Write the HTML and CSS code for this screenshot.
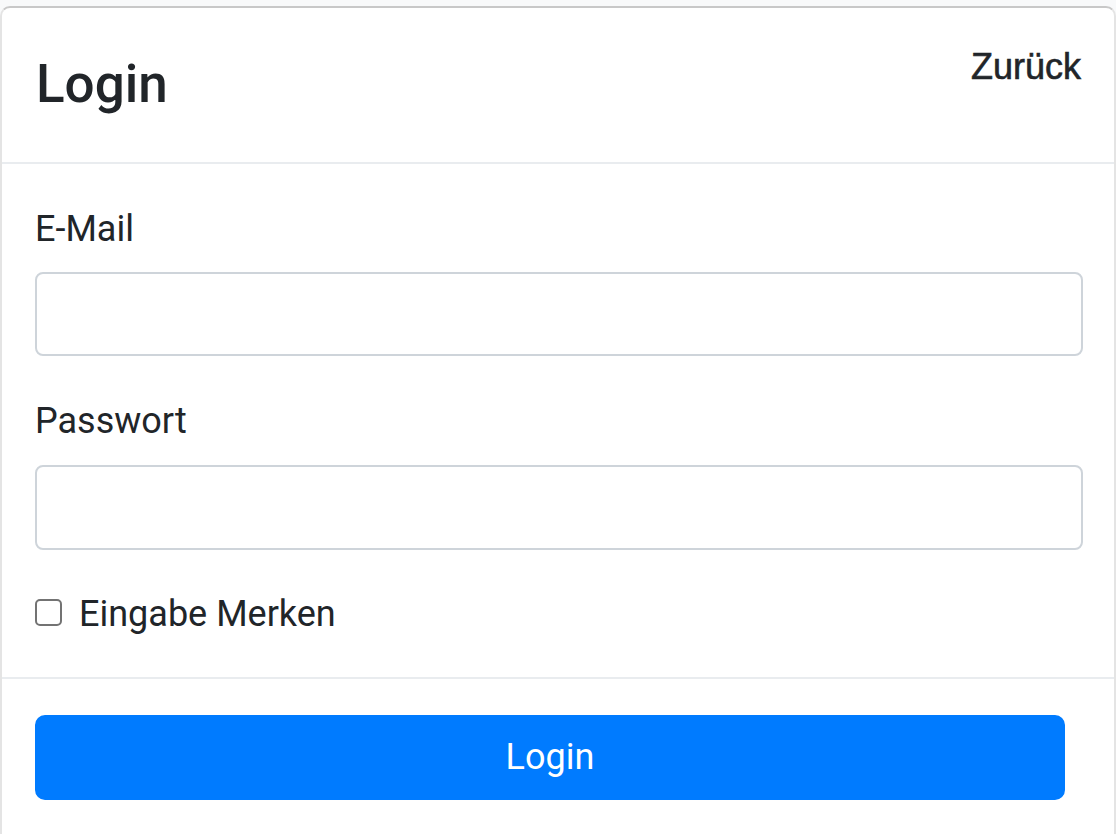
FILE: index.html
```html
<!DOCTYPE html>
<html lang="de">
<head>
<meta charset="utf-8">
<title>Login</title>
<link rel="stylesheet" href="styles.css">
</head>
<body>
<div class="card">
  <div class="card-header">
    <h3 class="title">Login</h3>
    <a class="back" href="#">Zurück</a>
  </div>
  <div class="card-body">
    <div class="group">
      <label class="label" for="email">E-Mail</label>
      <input class="input" id="email" type="email">
    </div>
    <div class="group group-pw">
      <label class="label" for="pw">Passwort</label>
      <input class="input input-pw" id="pw" type="password">
    </div>
    <label class="check">
      <span class="box"></span>
      <span class="check-text">Eingabe Merken</span>
    </label>
  </div>
  <div class="card-footer">
    <button class="btn" type="button">Login</button>
  </div>
</div>
</body>
</html>
```

FILE: styles.css
```css
* { box-sizing: border-box; }
html, body { margin: 0; padding: 0; }
body {
  background: #f8f9fa;
  font-family: Roboto, "Liberation Sans", Arial, sans-serif;
  color: #212529;
  overflow: hidden;
  height: 834px;
}
.card {
  margin-top: 6px;
  background: #fff;
  border: 2px solid #c8c8c8;
  border-color: #c8c8c8 #e4e4e4 #e4e4e4 #e4e4e4;
  border-radius: 10px 10px 0 0;
  min-height: 840px;
}
.card-header {
  display: flex;
  justify-content: space-between;
  align-items: flex-start;
  padding: 45px 33px 45px 34px;
  border-bottom: 2px solid #e9ecef;
}
.title {
  margin: 0;
  font-size: 53px;
  font-weight: 500;
  line-height: 1.2;
}
.back {
  font-family: "Liberation Sans", Arial, sans-serif;
  font-size: 36px;
  line-height: 1.2;
  color: #212529;
  text-decoration: none;
  margin-top: -8px;
  -webkit-text-stroke: 0.6px #212529;
}
.card-body {
  padding: 38px 31px 36px 33px;
}
.group {
  margin-bottom: 38px;
}
.label {
  display: block;
  font-size: 36px;
  line-height: 54px;
  margin-bottom: 16px;
}
.group-pw .label { margin-bottom: 17px; }
.group-pw { margin-bottom: 37px; }
.input {
  display: block;
  width: 100%;
  height: 84px;
  border: 2px solid #ced4da;
  border-radius: 8px;
  background: #fff;
  font-size: 36px;
  padding: 0 24px;
  outline: none;
}
.input-pw { height: 85px; }
.check {
  display: flex;
  align-items: center;
  font-size: 36px;
  line-height: 54px;
}
.box {
  width: 27px;
  height: 27px;
  border: 2px solid #737373;
  border-radius: 5px;
  background: #fff;
  margin-right: 17px;
  flex: none;
  position: relative;
  top: -1px;
}
.card-footer {
  border-top: 2px solid #e9ecef;
  padding: 36px 49px 40px 33px;
}
.btn {
  display: block;
  width: 100%;
  height: 85px;
  background: #007bff;
  border: 2px solid #007bff;
  border-radius: 10px;
  color: #fff;
  font-family: Roboto, "Liberation Sans", Arial, sans-serif;
  font-size: 36px;
  line-height: 54px;
  padding: 0;
}
```
